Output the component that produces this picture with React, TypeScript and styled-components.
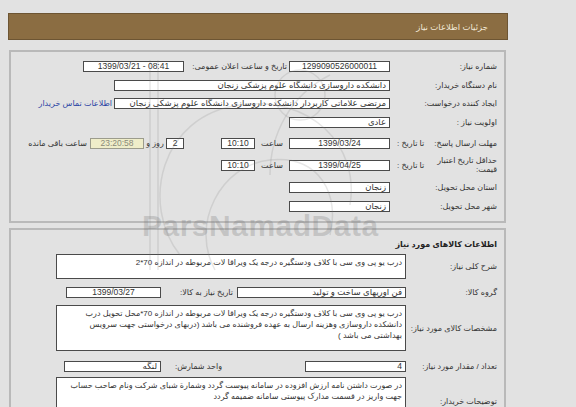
import React from "react";
import styled, { createGlobalStyle } from "styled-components";

const GlobalStyle = createGlobalStyle`
  html, body {
    margin: 0;
    padding: 0;
    background: #e2e2e2;
  }
  body {
    font-family: "Liberation Sans", "DejaVu Sans", sans-serif;
    font-size: 8px;
    color: #333;
  }
`;

const Page = styled.div`
  position: relative;
  width: 500px;
  padding: 13px 0 0 8px;
  direction: rtl;
  overflow: hidden;
`;

const Header = styled.div`
  box-sizing: border-box;
  height: 27px;
  display: flex;
  align-items: center;
  padding-right: 19px;
  background: #8b6d42;
  border: 1px solid #6d5533;
  color: #f2e9d8;
  font-size: 8.5px;
`;

const Panel = styled.div<{ $mt: number }>`
  margin: ${({ $mt }) => $mt}px 2px 0 1px;
  border: 2px solid #b9b9b9;
  padding: 4px 7px 6px 0;
`;

const Row = styled.div<{ $h?: number; $mt?: number }>`
  display: flex;
  align-items: center;
  height: ${({ $h }) => ($h ? `${$h}px` : "auto")};
  margin-top: ${({ $mt }) => $mt ?? 0}px;
`;

const Label = styled.div<{ $w: number }>`
  flex-shrink: 0;
  width: ${({ $w }) => $w}px;
  display: flex;
  align-items: center;
  justify-content: space-between;
  white-space: nowrap;
  color: #333;
`;

const LabelWrap = styled.span`
  width: 64px;
  white-space: normal;
  line-height: 9px;
`;

const SubLabel = styled.span`
  padding-left: 7px;
`;

const Field = styled.div<{ $w: number; $center?: boolean; $timer?: boolean; $mr?: number; $ltr?: boolean }>`
  box-sizing: border-box;
  flex-shrink: 0;
  width: ${({ $w }) => $w}px;
  height: 11px;
  margin-right: ${({ $mr }) => $mr ?? 0}px;
  padding: 0 3px;
  border: 1px solid ${({ $timer }) => ($timer ? "#9c9c8c" : "#4a4a4a")};
  background: ${({ $timer }) => ($timer ? "#efedc9" : "#fff")};
  color: ${({ $timer }) => ($timer ? "#8a8a7a" : "#333")};
  direction: ${({ $ltr }) => ($ltr ? "ltr" : "rtl")};
  font-size: 8.5px;
  line-height: 9px;
  text-align: ${({ $center }) => ($center ? "center" : "right")};
  white-space: nowrap;
  overflow: hidden;
`;

const Area = styled.div<{ $w: number; $h: number }>`
  box-sizing: border-box;
  flex-shrink: 0;
  width: ${({ $w }) => $w}px;
  height: ${({ $h }) => $h}px;
  padding: 2px 3px;
  border: 1px solid #4a4a4a;
  background: #fff;
  font-size: 8px;
  line-height: 11px;
  text-align: right;
  overflow: hidden;
`;

const Caption = styled.span<{ $w?: number; $pr?: number; $center?: boolean }>`
  flex-shrink: 0;
  box-sizing: border-box;
  width: ${({ $w }) => ($w ? `${$w}px` : "auto")};
  padding-right: ${({ $pr }) => $pr ?? 0}px;
  text-align: ${({ $center }) => ($center ? "center" : "right")};
  white-space: nowrap;
  color: #333;
`;

const Link = styled.a`
  margin-right: 2px;
  color: #2a43a4;
  text-decoration: none;
  white-space: nowrap;
`;

const Title = styled.div`
  height: 20px;
  display: flex;
  align-items: center;
  font-weight: bold;
  font-size: 8px;
  color: #222;
`;

const Watermark = styled.div`
  position: absolute;
  left: 0;
  top: 0;
  width: 576px;
  height: 407px;
  pointer-events: none;
`;

const MarkText = styled.div`
  position: absolute;
  left: 142px;
  top: 216px;
  height: 20px;
  direction: ltr;
  font-family: "Liberation Sans", sans-serif;
  font-weight: bold;
  font-size: 30px;
  line-height: 20px;
  color: rgba(120, 120, 120, 0.28);
  letter-spacing: 0.5px;
`;

const LogoSvg = styled.svg`
  position: absolute;
  left: 120px;
  top: 55px;
`;

export default function App() {
  return (
    <>
      <GlobalStyle />
      <Page>
        <Header>جزئیات اطلاعات نیاز</Header>

        <Panel $mt={10}>
          <Row $h={20}>
            <Label $w={107}>شماره نیاز:</Label>
            <Field $w={101} $center>1299090526000011</Field>
            <Caption $w={105} $pr={2}>تاریخ و ساعت اعلان عمومی:</Caption>
            <Field $w={101} $center $ltr>1399/03/21 - 08:41</Field>
          </Row>
          <Row $h={19}>
            <Label $w={107}>نام دستگاه خریدار:</Label>
            <Field $w={276}>دانشکده داروسازی دانشگاه علوم پزشکی زنجان</Field>
          </Row>
          <Row $h={17}>
            <Label $w={107}>ایجاد کننده درخواست:</Label>
            <Field $w={276}>مرتضی  علاماتی کاربردار دانشکده داروسازی دانشگاه علوم پزشکی زنجان</Field>
            <Link href="#">اطلاعات تماس خریدار</Link>
          </Row>
          <Row $h={21}>
            <Label $w={107}>اولویت نیاز :</Label>
            <Field $w={101}>عادی</Field>
          </Row>
          <Row $h={21}>
            <Label $w={107}>
              <span>مهلت ارسال پاسخ:</span>
              <SubLabel>تا تاریخ :</SubLabel>
            </Label>
            <Field $w={101} $center>1399/03/24</Field>
            <Caption $w={34} $center>ساعت</Caption>
            <Field $w={34} $center>10:10</Field>
            <Field $w={18} $mr={37} $center>2</Field>
            <Caption $w={22} $center>روز و</Caption>
            <Field $w={54} $center $timer>23:20:58</Field>
            <Caption $pr={3}>ساعت باقی مانده</Caption>
          </Row>
          <Row $h={22}>
            <Label $w={107}>
              <LabelWrap>حداقل تاریخ اعتبار قیمت:</LabelWrap>
              <SubLabel>تا تاریخ :</SubLabel>
            </Label>
            <Field $w={101} $center>1399/04/25</Field>
            <Caption $w={34} $center>ساعت</Caption>
            <Field $w={34} $center>10:10</Field>
          </Row>
          <Row $h={22}>
            <Label $w={107}>استان محل تحویل:</Label>
            <Field $w={101}>زنجان</Field>
          </Row>
          <Row $h={17}>
            <Label $w={107}>شهر محل تحویل:</Label>
            <Field $w={101}>زنجان</Field>
          </Row>
        </Panel>

        <Panel $mt={5}>
          <Title>اطلاعات کالاهای مورد نیاز</Title>
          <Row>
            <Label $w={91}>شرح کلی نیاز:</Label>
            <Area $w={350} $h={25}>
              درب یو پی وی سی با کلاف ودستگیره درجه یک ویراقا لات مربوطه در اندازه 70*2
            </Area>
          </Row>
          <Row $h={11} $mt={8}>
            <Label $w={91}>گروه کالا:</Label>
            <Field $w={169}>فن آوریهای ساخت و تولید</Field>
            <Caption $w={76} $pr={4}>تاریخ نیاز به کالا:</Caption>
            <Field $w={95} $center>1399/03/27</Field>
          </Row>
          <Row $mt={7}>
            <Label $w={91}>مشخصات کالای مورد نیاز:</Label>
            <Area $w={350} $h={46}>
              درب یو پی وی سی با کلاف ودستگیره درجه یک ویراقا لات مربوطه در اندازه 70*محل تحویل درب
              دانشکده داروسازی وهزینه ارسال به عهده فروشنده می باشد (دربهای درخواستی جهت سرویس
              بهداشتی می باشد )
            </Area>
          </Row>
          <Row $h={11} $mt={10}>
            <Label $w={91}>تعداد / مقدار مورد نیاز:</Label>
            <Field $w={101}>4</Field>
            <Caption $w={144} $pr={83}>واحد شمارش:</Caption>
            <Field $w={97}>لنگه</Field>
          </Row>
          <Row $mt={5}>
            <Label $w={91}>توضیحات خریدار:</Label>
            <Area $w={350} $h={48}>
              در صورت داشتن نامه ارزش افزوده در سامانه پیوست گردد وشمارة شبای شرکت ونام صاحب حساب
              جهت واریز در قسمت مدارک پیوستی  سامانه ضمیمه گردد
            </Area>
          </Row>
        </Panel>

        <Watermark>
          <LogoSvg width="290" height="220" viewBox="0 0 290 220" fill="none" stroke="rgba(120,120,120,0.18)" strokeWidth="1.5">
            <path d="M30 5 L30 215" />
            <path d="M38 5 L38 215" />
            <path d="M60 200 C20 150 40 60 120 50 C190 40 240 90 230 150" />
            <path d="M95 215 C70 170 100 110 150 105 C200 100 220 140 210 180" />
            <path d="M150 120 C150 80 170 40 210 20" />
            <circle cx="180" cy="40" r="25" />
          </LogoSvg>
          <MarkText>ParsNamadData</MarkText>
        </Watermark>
      </Page>
    </>
  );
}
